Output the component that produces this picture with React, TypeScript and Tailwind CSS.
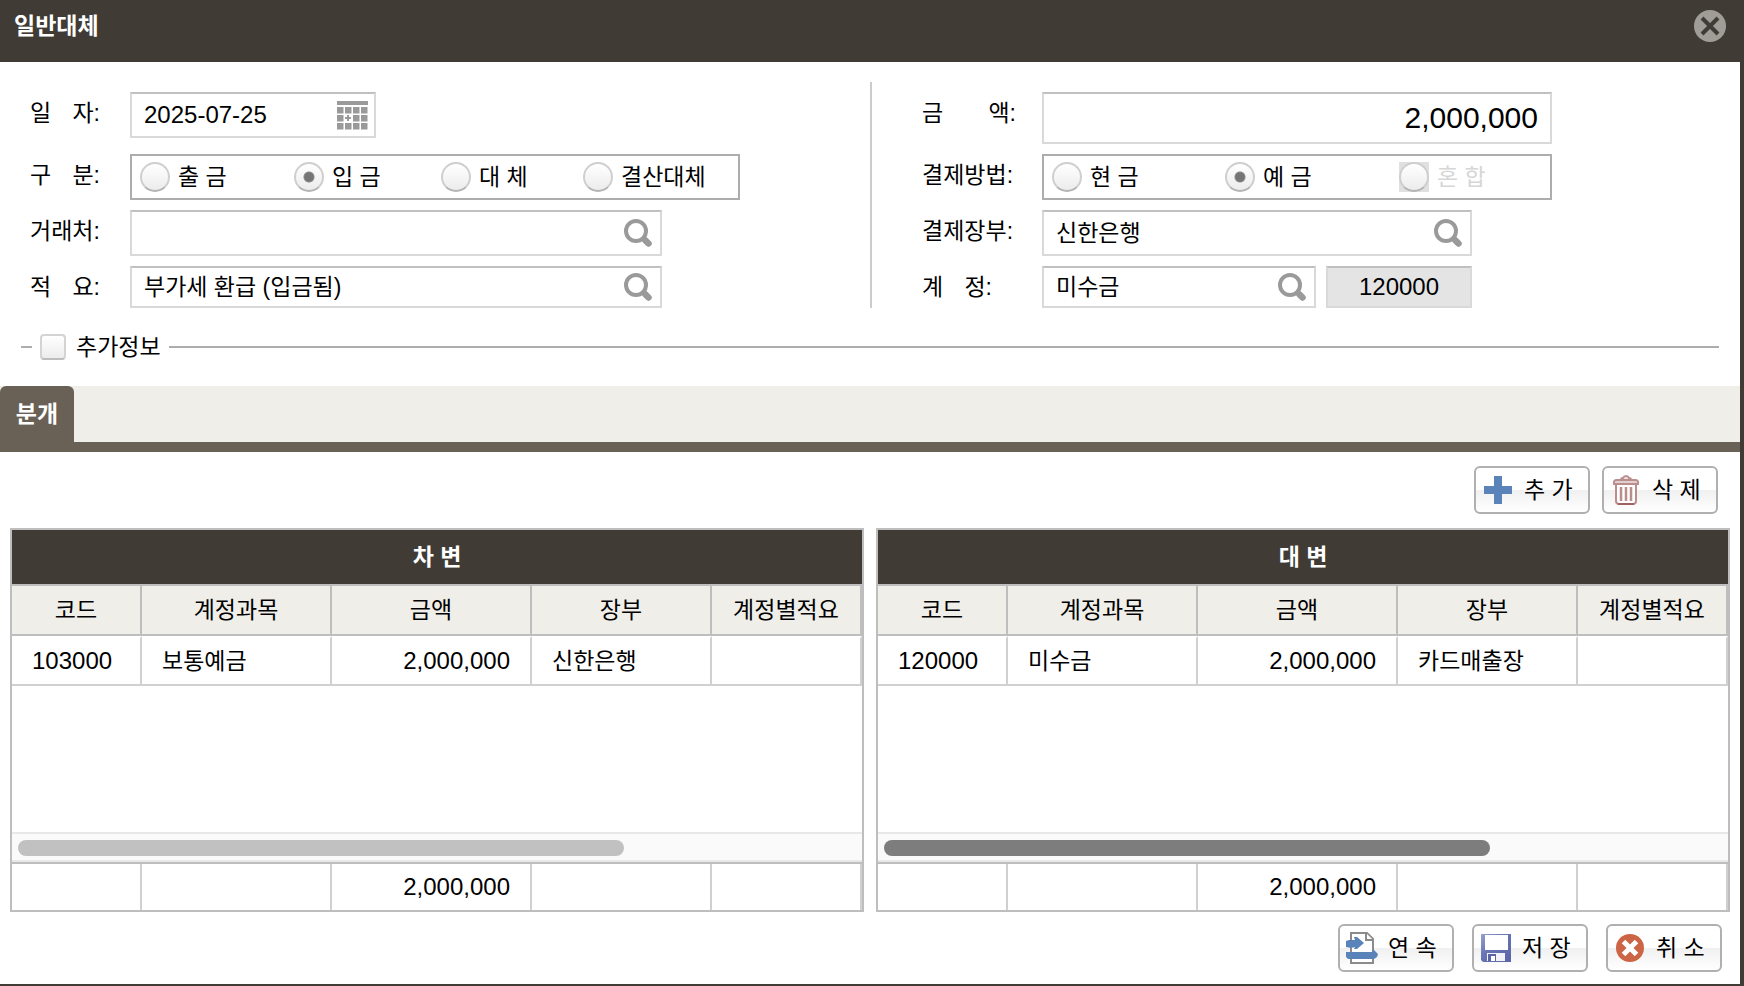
import { useState, type ReactNode } from "react";
import clsx from "clsx";

type Entry = {
  code: string;
  account: string;
  amount: string;
  ledger: string;
  memo: string;
};

type LedgerTableProps = {
  title: string;
  rows: Entry[];
  total: string;
  thumbClass: string;
};

const COLUMNS = ["코드", "계정과목", "금액", "장부", "계정별적요"];

const debitRows: Entry[] = [
  { code: "103000", account: "보통예금", amount: "2,000,000", ledger: "신한은행", memo: "" },
];

const creditRows: Entry[] = [
  { code: "120000", account: "미수금", amount: "2,000,000", ledger: "카드매출장", memo: "" },
];

const boxClass = "flex items-center border-2 border-[#d9d9d9] border-t-[#c0c0c0] bg-white";
const radioClass =
  "block size-[30px] appearance-none rounded-full border-2 border-[#cfcfcf] border-b-[#b4b4b4] bg-linear-to-b from-white to-[#ececec] checked:bg-[image:radial-gradient(circle,#757575_4px,#8a8a8a_5px,transparent_6px),linear-gradient(#fff,#ececec)]";

function SearchIcon() {
  return (
    <svg width="28" height="28" viewBox="0 0 28 28" fill="none" stroke="#9a9a9a">
      <circle cx="12" cy="12" r="10" strokeWidth="4" />
      <path d="M18.5 18.5 22 22" strokeWidth="6" />
      <path d="M22 22l2.5 2.5" strokeWidth="6.5" strokeLinecap="round" />
    </svg>
  );
}

function CalendarIcon() {
  return (
    <svg width="31" height="30" viewBox="0 0 31 30" fill="#9a9a9a">
      <rect x="0" y="1" width="31" height="4" />
      {[7, 15, 23].map((y) =>
        [0, 8, 16, 24].map((x) =>
          x === 8 && y === 15 ? (
            <path key={`${x}-${y}`} d="M10 15h2v2h2v2h-2v2h-2v-2h-2v-2h2z" />
          ) : (
            <rect key={`${x}-${y}`} x={x} y={y} width="6.500" height="6.500" />
          )
        )
      )}
    </svg>
  );
}

function CloseIcon() {
  return (
    <svg width="32" height="32" viewBox="0 0 32 32">
      <circle cx="16" cy="16" r="16" fill="#a09d99" />
      <path d="M8 8l16 16M24 8l-16 16" stroke="#403b34" strokeWidth="4" />
    </svg>
  );
}

function PlusIcon() {
  return (
    <svg width="28" height="28" viewBox="0 0 28 28">
      <path d="M10 0h8v10h10v8H18v10h-8V18H0v-8h10z" fill="#5a83b9" />
    </svg>
  );
}

function TrashIcon() {
  return (
    <svg width="28" height="30" viewBox="0 0 28 30" fill="none" stroke="#b98e8c" strokeWidth="2">
      <path d="M9 5q0-2 2-2 1-2 3-2t3 2q2 0 2 2" fill="#efe2e1" />
      <path d="M4 9v17q0 3 3 3h14q3 0 3-3V9" fill="#fff" />
      <path d="M2 9q-1-4 3-4h18q4 0 3 4z" fill="#e3cfce" />
      <path d="M9 12v14M14 12v14M19 12v14" strokeWidth="2.500" />
      <path d="M6 29h16" stroke="#a06361" />
    </svg>
  );
}

function ContinueIcon() {
  return (
    <svg width="32" height="32" viewBox="0 0 32 32">
      <path d="M5 1h16l6 6v24H5z" fill="#fff" stroke="#8b8b8b" strokeWidth="2" />
      <path d="M20 1v7h7" fill="#fff" stroke="#8b8b8b" strokeWidth="2" />
      <path d="M0 9l3-1h6l-1-3h3l7 6-7 6H8l1-2-4 1-5-1z" fill="#5a83b9" />
      <path d="M0 20h26l1-3 5 5-1 3-3 2H2l-2-2z" fill="#5a83b9" />
    </svg>
  );
}

function SaveIcon() {
  return (
    <svg width="30" height="28" viewBox="0 0 30 28">
      <defs>
        <linearGradient id="disk" x1="0" y1="0" x2="1" y2="1">
          <stop offset="0" stopColor="#98a2cd" />
          <stop offset="0.4" stopColor="#6876b5" />
          <stop offset="1" stopColor="#5a65a6" />
        </linearGradient>
      </defs>
      <path d="M0 0h30v28H2l-2-2z" fill="url(#disk)" />
      <path d="M4 1h23v15H4z" fill="#fff" />
      <path d="M6 19h18v8H6z" fill="#f2f3f9" />
      <path d="M7 20h8v7H7z" fill="#5a65a6" />
      <path d="M10 22h4v5h-4z" fill="#fff" />
    </svg>
  );
}

function CancelIcon() {
  return (
    <svg width="28" height="28" viewBox="0 0 28 28">
      <circle cx="14" cy="14" r="14" fill="#cb6545" />
      <path d="M7.500 7.500l13 13M20.500 7.500l-13 13" stroke="#fff" strokeWidth="5" />
    </svg>
  );
}

function FieldLabel({ htmlFor, parts, wide }: { htmlFor?: string; parts: string[]; wide?: boolean }) {
  return (
    <label
      htmlFor={htmlFor}
      className={clsx(
        "flex h-[42px] items-center justify-between self-start justify-self-start whitespace-nowrap",
        wide ? "w-[94px]" : "w-[70px]"
      )}
    >
      {parts.map((part) => (
        <span key={part}>{part}</span>
      ))}
    </label>
  );
}

function SearchField({ id, value, className }: { id: string; value: string; className: string }) {
  return (
    <div className={clsx(boxClass, className)}>
      <input
        id={id}
        type="text"
        defaultValue={value}
        className="h-full min-w-0 flex-1 bg-transparent pb-1 pl-3 outline-none"
      />
      <button type="button" aria-label="검색" className="mr-2 shrink-0">
        <SearchIcon />
      </button>
    </div>
  );
}

type RadioProps = {
  name: string;
  label: string;
  checked: boolean;
  disabled?: boolean;
  onChange: () => void;
};

function Radio({ name, label, checked, disabled, onChange }: RadioProps) {
  return (
    <label className={clsx("flex items-center gap-2 whitespace-nowrap", disabled && "text-[#d6d6d6]")}>
      <span className={clsx(disabled && "bg-[#e0e0e0]")}>
        <input
          type="radio"
          name={name}
          checked={checked}
          disabled={disabled}
          onChange={onChange}
          className={radioClass}
        />
      </span>
      {label}
    </label>
  );
}

function ToolButton({ icon, children }: { icon: ReactNode; children: ReactNode }) {
  return (
    <button
      type="button"
      className="flex h-12 w-[116px] items-center gap-[10px] rounded-md border-2 border-[#b0b0b0] bg-linear-to-b from-white from-50% via-[#f0f0f0] via-50% to-white pl-1.5 whitespace-nowrap"
    >
      <span className="flex w-8 shrink-0 justify-center">{icon}</span>
      {children}
    </button>
  );
}

function ColGroup() {
  return (
    <colgroup>
      <col className="w-[130px]" />
      <col className="w-[190px]" />
      <col className="w-[200px]" />
      <col className="w-[180px]" />
      <col />
    </colgroup>
  );
}

function LedgerTable({ title, rows, total, thumbClass }: LedgerTableProps) {
  const tableClass = "w-full table-fixed border-separate border-spacing-0";
  const cellClass = "border-r-2 border-r-[#d0d0d0] p-0";

  return (
    <section className="flex min-w-0 flex-col border-2 border-[#bebebe]">
      <h2 className="flex h-[54px] items-center justify-center bg-[#403b34] font-bold text-white">
        {title}
      </h2>
      <table className={tableClass}>
        <ColGroup />
        <thead>
          <tr className="h-[52px]">
            {COLUMNS.map((column) => (
              <th
                key={column}
                scope="col"
                className="border-y-2 border-r-2 border-[#bebebe] bg-[#efeee9] p-0 font-normal"
              >
                {column}
              </th>
            ))}
          </tr>
        </thead>
        <tbody>
          {rows.map((row) => (
            <tr key={row.code} className="h-[50px] [&>td]:border-y-2 [&>td]:border-t-white [&>td]:border-b-[#d0d0d0]">
              <td className={clsx(cellClass, "pl-5 text-2xl leading-7")}>{row.code}</td>
              <td className={clsx(cellClass, "pl-5")}>{row.account}</td>
              <td className={clsx(cellClass, "pr-5 text-right text-2xl leading-7")}>{row.amount}</td>
              <td className={clsx(cellClass, "pl-5")}>{row.ledger}</td>
              <td className={cellClass}>{row.memo}</td>
            </tr>
          ))}
        </tbody>
      </table>
      <div className="flex-1" />
      <div className="h-[30px] border-y-2 border-[#e8e8e8] bg-[#fafafa] px-1.5 py-1.5">
        <div className={clsx("h-4 w-[606px] rounded-full", thumbClass)} />
      </div>
      <table className={clsx(tableClass, "border-t-2 border-[#bebebe]")}>
        <ColGroup />
        <tbody>
          <tr className="h-[46px]">
            <td className={cellClass} />
            <td className={cellClass} />
            <td className={clsx(cellClass, "pr-5 text-right text-2xl leading-7")}>{total}</td>
            <td className={cellClass} />
            <td className={cellClass} />
          </tr>
        </tbody>
      </table>
    </section>
  );
}

export default function App() {
  const [kind, setKind] = useState("입 금");
  const [payment, setPayment] = useState("예 금");

  return (
    <div className="flex min-h-screen flex-col border-r-4 border-b-2 border-[#403b34] bg-white font-['Liberation_Sans','Noto_Sans_CJK_KR',sans-serif] text-[23px] leading-7 text-black">
      <header className="flex h-[62px] items-start justify-between bg-[#403b34] pt-[10px] pr-[14px] pl-[14px]">
        <h1 className="leading-8 font-bold text-white">일반대체</h1>
        <button type="button" aria-label="닫기">
          <CloseIcon />
        </button>
      </header>

      <form className="grid grid-cols-2 pt-5">
        <div className="grid grid-cols-[100px_1fr] grid-rows-[52px_46px_46px_42px] gap-y-[10px] pt-[10px] pl-[30px]">
          <FieldLabel htmlFor="date" parts={["일", "자:"]} />
          <div className={clsx(boxClass, "h-[46px] w-[246px]")}>
            <input
              id="date"
              type="text"
              defaultValue="2025-07-25"
              className="h-full min-w-0 flex-1 bg-transparent pl-3 text-2xl outline-none"
            />
            <button type="button" aria-label="달력" className="mr-1.5 shrink-0">
              <CalendarIcon />
            </button>
          </div>

          <FieldLabel parts={["구", "분:"]} />
          <div
            role="radiogroup"
            aria-label="구분"
            className="grid w-[610px] grid-cols-[154px_147px_142px_1fr] items-center border-2 border-[#adadad] pl-2"
          >
            {["출 금", "입 금", "대 체", "결산대체"].map((label) => (
              <Radio
                key={label}
                name="kind"
                label={label}
                checked={kind === label}
                onChange={() => setKind(label)}
              />
            ))}
          </div>

          <FieldLabel htmlFor="client" parts={["거래처:"]} />
          <SearchField id="client" value="" className="w-[532px]" />

          <FieldLabel htmlFor="summary" parts={["적", "요:"]} />
          <SearchField id="summary" value="부가세 환급 (입금됨)" className="w-[532px]" />
        </div>

        <div className="grid grid-cols-[120px_1fr] grid-rows-[52px_46px_46px_42px] gap-y-[10px] border-l-2 border-[#cccccc] pt-[10px] pl-[50px]">
          <FieldLabel htmlFor="amount" parts={["금", "액:"]} wide />
          <div className={clsx(boxClass, "w-[510px]")}>
            <input
              id="amount"
              type="text"
              defaultValue="2,000,000"
              className="h-full w-full bg-transparent pr-3 text-right text-3xl outline-none"
            />
          </div>

          <FieldLabel parts={["결제방법:"]} wide />
          <div
            role="radiogroup"
            aria-label="결제방법"
            className="grid w-[510px] grid-cols-[173px_174px_1fr] items-center border-2 border-[#adadad] pl-2"
          >
            {["현 금", "예 금", "혼 합"].map((label) => (
              <Radio
                key={label}
                name="payment"
                label={label}
                checked={payment === label}
                disabled={label === "혼 합"}
                onChange={() => setPayment(label)}
              />
            ))}
          </div>

          <FieldLabel htmlFor="book" parts={["결제장부:"]} wide />
          <SearchField id="book" value="신한은행" className="w-[430px]" />

          <FieldLabel htmlFor="account" parts={["계", "정:"]} />
          <div className="flex gap-[10px]">
            <SearchField id="account" value="미수금" className="w-[274px]" />
            <input
              type="text"
              readOnly
              aria-label="계정 코드"
              value="120000"
              className="w-[146px] border-2 border-[#d9d9d9] border-t-[#c0c0c0] bg-[#e4e4e4] text-center text-2xl outline-none"
            />
          </div>
        </div>
      </form>

      <div className="mt-6 flex h-[30px] items-center px-[21px]">
        <span className="h-0.5 w-[11px] bg-[#adadad]" />
        <label className="flex items-center gap-[10px] px-2 whitespace-nowrap">
          <input
            type="checkbox"
            className="size-[26px] appearance-none rounded-sm border-2 border-[#d4d4d4] border-b-[#bdbdbd] bg-linear-to-b from-white to-[#ececec] checked:bg-[#8a8a8a]"
          />
          추가정보
        </label>
        <span className="h-0.5 flex-1 bg-[#adadad]" />
      </div>

      <div role="tablist" className="mt-6 flex border-b-[10px] border-[#696155] bg-[#efeee9]">
        <button
          type="button"
          role="tab"
          aria-selected="true"
          className="h-14 w-[74px] rounded-t-md bg-[#696155] font-bold text-white"
        >
          분개
        </button>
      </div>

      <div className="flex justify-end gap-3 pt-[14px] pr-[22px]">
        <ToolButton icon={<PlusIcon />}>추 가</ToolButton>
        <ToolButton icon={<TrashIcon />}>삭 제</ToolButton>
      </div>

      <main className="mt-[14px] grid flex-1 grid-cols-2 gap-3 px-[10px]">
        <LedgerTable title="차 변" rows={debitRows} total="2,000,000" thumbClass="bg-[#c1c1c1]" />
        <LedgerTable title="대 변" rows={creditRows} total="2,000,000" thumbClass="bg-[#7d7d7d]" />
      </main>

      <footer className="flex justify-end gap-[18px] pt-3 pr-[18px] pb-3">
        <ToolButton icon={<ContinueIcon />}>연 속</ToolButton>
        <ToolButton icon={<SaveIcon />}>저 장</ToolButton>
        <ToolButton icon={<CancelIcon />}>취 소</ToolButton>
      </footer>
    </div>
  );
}
